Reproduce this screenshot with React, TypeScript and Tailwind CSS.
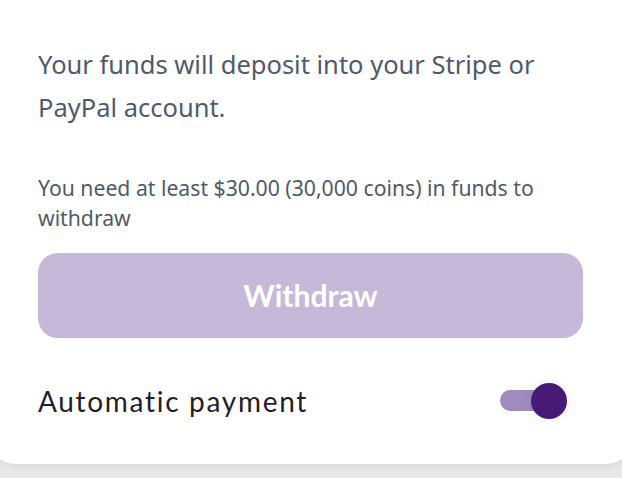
export default function App() {
  return (
    <div className="h-[478px] w-[622px] overflow-hidden bg-[#e8e8ea]">
      <div className="-mx-[12px] rounded-b-[28px] bg-white pl-[50px] pr-[51px] pt-[43px] pb-[45px] shadow-[0_2px_10px_rgba(0,0,0,0.06)]">
        <p className="text-[25.5px] leading-[43px] text-[#515a6a] [font-family:'Noto_Sans',sans-serif]">
          Your funds will deposit into your Stripe or PayPal account.
        </p>
        <p className="mt-[44px] text-[21.2px] leading-[30px] text-[#515a6a] [font-family:'Noto_Sans',sans-serif]">
          You need at least $30.00 (30,000 coins) in funds to withdraw
        </p>
        <button
          type="button"
          className="mt-[20px] flex h-[85px] w-full items-center justify-center rounded-[20px] bg-[#c6b8d8] text-[30px] font-bold text-white [font-family:Lato,sans-serif]"
        >
          Withdraw
        </button>
        <div className="mt-[45px] flex items-center justify-between">
          <span className="text-[28px] leading-[36px] tracking-[1.7px] text-[#1e1e2d] [font-family:Lato,sans-serif]">Automatic payment</span>
          <div className="relative mr-[16px] h-[36px] w-[67px]">
            <div className="absolute left-0 top-[7px] h-[21px] w-[50px] rounded-full bg-[#a08bbf]" />
            <div className="absolute right-0 top-0 h-[36px] w-[36px] rounded-full bg-[#471a78] shadow-[0_0_14px_rgba(0,0,0,0.08)]" />
          </div>
        </div>
      </div>
    </div>
  );
}
